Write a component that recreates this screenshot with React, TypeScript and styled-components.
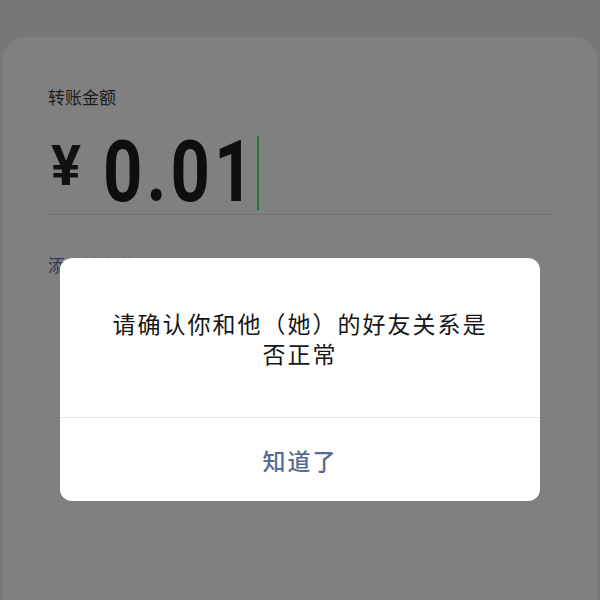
import React from "react";
import styled, { createGlobalStyle } from "styled-components";

const GlobalStyle = createGlobalStyle`
  html, body {
    margin: 0;
    padding: 0;
    background: #777777;
  }
  body {
    font-family: "Noto Sans CJK SC", "Noto Sans", sans-serif;
  }
`;

const Screen = styled.div`
  position: relative;
  width: 600px;
  height: 600px;
  overflow: hidden;
  background: #777777;
  padding-top: 37px;
  box-sizing: border-box;
`;

const Card = styled.div`
  height: 100%;
  margin: 0 3px;
  padding: 48px 44px 0 45px;
  background: #808080;
  border-radius: 22px 22px 0 0;
  box-sizing: border-box;
`;

const Label = styled.div`
  font-size: 17px;
  line-height: 24px;
  color: #1c1c1c;
`;

const AmountRow = styled.div`
  display: flex;
  align-items: center;
  height: 77px;
  margin-top: 20px;
  padding-left: 3px;
  border-bottom: 1px solid #727272;
  padding-bottom: 8px;
`;

const Currency = styled.span`
  font-family: Roboto, "Liberation Sans", sans-serif;
  font-weight: 700;
  font-size: 56px;
  line-height: 1;
  color: #111;
  margin-bottom: 4px;
`;

const Digits = styled.span`
  display: inline-block;
  margin-left: 22px;
  font-family: Roboto, "Liberation Sans", sans-serif;
  font-weight: 700;
  font-size: 86px;
  line-height: 1;
  letter-spacing: 5px;
  color: #0e0e0e;
  transform: scaleX(0.8);
  transform-origin: left center;
  margin-right: -39px;
  padding-top: 8px;
`;

const Caret = styled.span`
  width: 2px;
  height: 74px;
  margin-top: 11px;
  background: #1f7a3e;
`;

const LinkText = styled.div`
  margin-top: 38px;
  font-size: 17px;
  line-height: 24px;
  color: #2e3650;
`;

const Dialog = styled.div`
  position: absolute;
  left: 60px;
  top: 258px;
  width: 480px;
  background: #ffffff;
  border-radius: 12px;
  overflow: hidden;
`;

const Message = styled.div`
  height: 160px;
  padding: 0 44px;
  display: flex;
  align-items: center;
  justify-content: center;
  text-align: center;
  font-size: 23px;
  line-height: 30px;
  letter-spacing: 2px;
  color: #151515;
  border-bottom: 1px solid #e8e8e8;
  box-sizing: border-box;
`;

const ActionButton = styled.button`
  display: block;
  width: 100%;
  height: 83px;
  border: none;
  background: transparent;
  font-family: "Noto Sans CJK SC", sans-serif;
  font-size: 23px;
  font-weight: 500;
  letter-spacing: 2px;
  color: #576b95;
  cursor: pointer;
`;

export default function App() {
  return (
    <>
      <GlobalStyle />
      <Screen>
        <Card>
          <Label>转账金额</Label>
          <AmountRow>
            <Currency>¥</Currency>
            <Digits>0.01</Digits>
            <Caret />
          </AmountRow>
          <LinkText>添加转账说明</LinkText>
        </Card>
        <Dialog>
          <Message>请确认你和他（她）的好友关系是否正常</Message>
          <ActionButton>知道了</ActionButton>
        </Dialog>
      </Screen>
    </>
  );
}
